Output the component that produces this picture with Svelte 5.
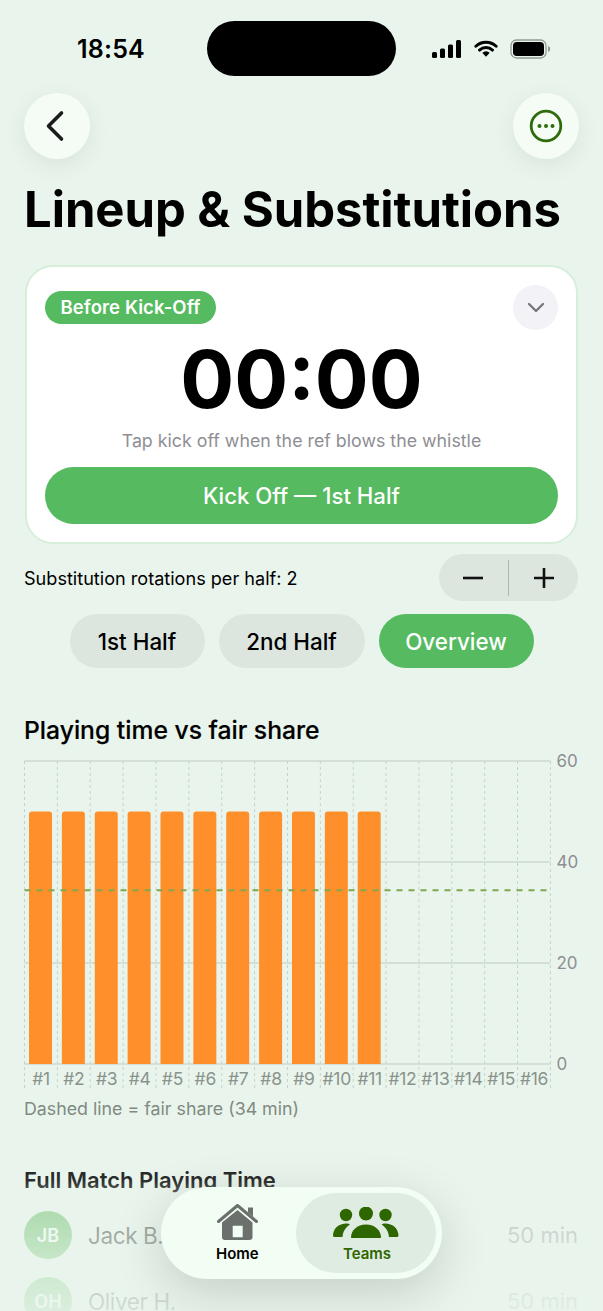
<script>
  const ticks = [60, 40, 20, 0];
  const top = 8;
  const plotH = 303;
  const colW = 32.87;
  const players = Array.from({ length: 16 }, (_, i) => ({
    label: "#" + (i + 1),
    minutes: i < 11 ? 50 : 0
  }));
  const y = (v) => top + plotH - (v / 60) * plotH;

  const rows = [
    { initials: "JB", name: "Jack B.", time: "50 min" },
    { initials: "OH", name: "Oliver H.", time: "50 min" }
  ];
</script>

<div class="page">
  <div class="status">
    <span class="time">18:54</span>
    <div class="island"></div>
    <div class="status-icons">
      <svg width="30" height="18" viewBox="0 0 30 18">
        <rect x="0" y="12" width="5" height="6" rx="1.5" />
        <rect x="8" y="8.5" width="5" height="9.5" rx="1.5" />
        <rect x="16" y="4.5" width="5" height="13.5" rx="1.5" />
        <rect x="24" y="0" width="5" height="18" rx="1.5" />
      </svg>
      <svg width="24" height="18" viewBox="0 0 26 19">
        <path d="M2 6.5a16 16 0 0 1 22 0M6 10.7a10.2 10.2 0 0 1 14 0" fill="none" stroke="#000" stroke-width="3.2" stroke-linecap="round" />
        <path d="M9 13.6a6 6 0 0 1 8 0L13 18z" />
      </svg>
      <svg width="41" height="20" viewBox="0 0 41 20">
        <rect x="1" y="1" width="35" height="18" rx="5.5" fill="none" stroke="#8f9a92" stroke-width="1.3" />
        <rect x="3" y="3" width="31" height="14" rx="3.8" />
        <path d="M38 7v6c1.4-.4 2.2-1.6 2.2-3S39.400 7.400 38 7z" fill="#8f9a92" />
      </svg>
    </div>
  </div>

  <div class="nav">
    <button class="round" aria-label="Back">
      <svg width="24" height="34" viewBox="0 0 24 34">
        <path d="M16.500 4 3.500 17l13 13" fill="none" stroke="#1c1c1e" stroke-width="3.600" stroke-linecap="round" stroke-linejoin="round" />
      </svg>
    </button>
    <button class="round" aria-label="More">
      <svg width="34" height="34" viewBox="0 0 34 34">
        <circle cx="17" cy="17" r="14.800" fill="none" stroke="#2e6b0a" stroke-width="2.800" />
        <circle cx="10.500" cy="17" r="2" fill="#2e6b0a" />
        <circle cx="17" cy="17" r="2" fill="#2e6b0a" />
        <circle cx="23.500" cy="17" r="2" fill="#2e6b0a" />
      </svg>
    </button>
  </div>

  <h1>Lineup &amp; Substitutions</h1>

  <section class="card">
    <div class="card-top">
      <span class="badge">Before Kick-Off</span>
      <button class="chev" aria-label="Collapse">
        <svg width="18" height="11" viewBox="0 0 18 11">
          <path d="M2 2l7 7 7-7" fill="none" stroke="#77777d" stroke-width="2.400" stroke-linecap="round" stroke-linejoin="round" />
        </svg>
      </button>
    </div>
    <div class="timer">00:00</div>
    <p class="hint">Tap kick off when the ref blows the whistle</p>
    <button class="kick">Kick Off — 1st Half</button>
  </section>

  <div class="rotations">
    <span>Substitution rotations per half: 2</span>
    <div class="stepper">
      <button aria-label="Decrease">
        <svg width="20" height="20" viewBox="0 0 20 20"><path d="M0 10h20" stroke="#111" stroke-width="2.600" /></svg>
      </button>
      <i></i>
      <button aria-label="Increase">
        <svg width="20" height="20" viewBox="0 0 20 20"><path d="M0 10h20M10 0v20" stroke="#111" stroke-width="2.600" /></svg>
      </button>
    </div>
  </div>

  <div class="tabs">
    <button class="tab first">1st Half</button>
    <button class="tab second">2nd Half</button>
    <button class="tab active">Overview</button>
  </div>

  <h2 class="chart-title">Playing time vs fair share</h2>

  <svg class="chart" width="603" height="344" viewBox="0 0 603 344">
    <g transform="translate(24.500 0)">
      {#each players as p, i}
        <line x1={i * colW} x2={i * colW} y1={top} y2="335" class="vline" />
      {/each}
      <line x1={16 * colW} x2={16 * colW} y1={top} y2="335" class="vline" />
      {#each ticks as t}
        <line x1="0" x2={16 * colW} y1={y(t)} y2={y(t)} class="hline" />
        <text x="532" y={y(t) + 6} class="tick">{t}</text>
      {/each}
      {#each players as p, i}
        {#if p.minutes > 0}
          <path
            d="M{i * colW + 4.500} {y(0)}V{y(p.minutes) + 3}q0-3 3-3h17q3 0 3 3V{y(0)}z"
            fill="#ff8f2b"
          />
        {/if}
        <text x={i * colW + colW / 2} y="332" class="xlabel">{p.label}</text>
      {/each}
      <line x1="0" x2={16 * colW} y1={y(34.4)} y2={y(34.4)} class="fair" />
    </g>
  </svg>

  <p class="caption">Dashed line = fair share (34 min)</p>

  <h2 class="list-title">Full Match Playing Time</h2>

  <div class="list">
    {#each rows as r}
      <div class="row">
        <span class="avatar">{r.initials}</span>
        <span class="name">{r.name}</span>
        <span class="mins">{r.time}</span>
      </div>
    {/each}
  </div>

  <div class="fade"></div>

  <nav class="tabbar">
    <div class="tabitem home">
      <svg width="42" height="37" viewBox="0 0 42 37">
        <path d="M1.500 17.500 20.500 1.500l19 16" fill="none" stroke="#6b706d" stroke-width="3" stroke-linecap="round" stroke-linejoin="round" />
        <path d="M31 3.500h5v9l-5-4z" fill="#6b706d" />
        <path fill-rule="evenodd" d="M20.500 6 35.500 18.500V33a3 3 0 0 1-3 3H8a3 3 0 0 1-3-3V18.500zM15.700 21.700v11.600h10V21.700z" fill="#6b706d" />
      </svg>
      <span>Home</span>
    </div>
    <div class="tabitem teams">
      <svg width="66" height="32" viewBox="0 0 66 32">
        <circle cx="13" cy="8" r="6.200" />
        <circle cx="33" cy="6.500" r="7" />
        <circle cx="52.500" cy="8" r="6.200" />
        <path d="M0 29c0-7 5-12 12.500-12.500 2.500 0 4 .5 4.500 1-4 2.500-7 6.500-7.500 12.500H1.500Q0 30 0 29zM65.500 29c0-7-5-12-12.500-12.500-2.500 0-4 .5-4.500 1 4 2.500 7 6.500 7.500 12.500h7.500q2 0 2-1z" />
        <path d="M18 30.500c0-7 6-13 15-13s15 6 15 13q0 .5-1 .5H19q-1 0-1-.5z" />
      </svg>
      <span>Teams</span>
    </div>
  </nav>
</div>

<style>
  :global(body) {
    margin: 0;
    background: #e9f5ec;
  }

  .page {
    position: relative;
    height: 1311px;
    overflow: hidden;
    background: #e9f5ec;
    font-family: Inter, "Liberation Sans", sans-serif;
    color: #000;
    box-sizing: border-box;
  }

  button {
    font-family: inherit;
    border: none;
    padding: 0;
  }

  .status {
    display: grid;
    grid-template-columns: 207px 189px 1fr;
    align-items: center;
    padding-top: 21px;
    height: 55px;
  }

  .time {
    justify-self: center;
    margin-left: 15px;
    font-size: 25px;
    font-weight: 600;
    letter-spacing: 0.2px;
  }

  .island {
    height: 55px;
    border-radius: 28px;
    background: #000;
  }

  .status-icons {
    display: flex;
    align-items: center;
    gap: 12px;
    margin-left: 36px;
  }

  .nav {
    display: flex;
    justify-content: space-between;
    padding: 17px 24px 0;
  }

  .round {
    width: 66px;
    height: 66px;
    border-radius: 50%;
    background: #f5fcf6;
    box-shadow: 0 6px 24px rgba(0, 0, 0, 0.07);
    display: flex;
    align-items: center;
    justify-content: center;
  }

  h1 {
    margin: 21px 0 0 24px;
    font-size: 49px;
    line-height: 60px;
    font-weight: 700;
    letter-spacing: -0.05px;
    white-space: nowrap;
  }

  .card {
    margin: 25px 25px 0;
    height: 279px;
    box-sizing: border-box;
    padding: 18px 18px 0;
    background: #fff;
    border: 2px solid #d6eeda;
    border-radius: 28px;
  }

  .card-top {
    display: flex;
    justify-content: space-between;
    align-items: center;
  }

  .badge {
    height: 33px;
    line-height: 33px;
    padding: 0 15.500px;
    border-radius: 17px;
    background: #55ba60;
    color: #fff;
    font-size: 18.500px;
    font-weight: 600;
    letter-spacing: 0.1px;
  }

  .chev {
    width: 45px;
    height: 45px;
    border-radius: 50%;
    background: #f2f2f7;
    display: flex;
    align-items: center;
    justify-content: center;
  }

  .timer {
    margin-top: -1px;
    text-align: center;
    font-size: 80px;
    line-height: 100px;
    font-weight: 700;
  }

  .hint {
    margin: 0;
    text-align: center;
    font-size: 17.800px;
    line-height: 24px;
    color: #8e8e93;
  }

  .kick {
    display: block;
    width: 100%;
    height: 57px;
    margin-top: 14px;
    border-radius: 29px;
    background: #55ba60;
    color: #fff;
    font-size: 22.200px;
    font-weight: 500;
  }

  .rotations {
    display: flex;
    justify-content: space-between;
    align-items: center;
    margin: 10px 25px 0 24px;
    font-size: 18.100px;
  }

  .stepper {
    display: flex;
    align-items: center;
    width: 139px;
    height: 47px;
    border-radius: 24px;
    background: #dce6df;
  }

  .stepper button {
    flex: 1;
    height: 47px;
    background: none;
    display: flex;
    align-items: center;
    justify-content: center;
  }

  .stepper i {
    width: 1.500px;
    height: 36px;
    background: #aeb6b0;
  }

  .tabs {
    display: flex;
    justify-content: center;
    gap: 14px;
    margin-top: 13px;
  }

  .tab {
    height: 54px;
    border-radius: 27px;
    background: #dce6df;
    color: #000;
    font-size: 22.400px;
    font-weight: 500;
  }

  .first {
    width: 135px;
  }

  .second {
    width: 146px;
  }

  .active {
    width: 155px;
    background: #55ba60;
    color: #fff;
  }

  h2 {
    margin: 0;
    font-weight: 600;
  }

  .chart-title {
    margin: 45px 0 0 24px;
    font-size: 24.700px;
    line-height: 34px;
    font-weight: 500;
    -webkit-text-stroke: 0.2px #000;
  }

  .chart {
    display: block;
    margin-top: 6px;
  }

  .vline {
    stroke: #c6d2ca;
    stroke-width: 1;
    stroke-dasharray: 3 3;
  }

  .hline {
    stroke: #cdd8cf;
    stroke-width: 1.500;
  }

  .fair {
    stroke: #7fa850;
    stroke-width: 2;
    stroke-dasharray: 6 6;
  }

  .tick {
    font-size: 17px;
    fill: #8e8e93;
  }

  .xlabel {
    font-size: 17.500px;
    letter-spacing: -0.3px;
    fill: #8a938c;
    text-anchor: middle;
  }

  .caption {
    margin: 0 0 0 24px;
    font-size: 17.800px;
    line-height: 24px;
    color: #7f8a82;
  }

  .list-title {
    margin: 45px 0 0 24px;
    font-size: 22px;
    line-height: 28px;
    color: #111;
  }

  .list {
    display: flex;
    flex-direction: column;
    gap: 18px;
    margin: 17px 25px 0 24px;
  }

  .row {
    display: flex;
    align-items: center;
    gap: 16px;
    height: 48px;
  }

  .avatar {
    width: 48px;
    height: 48px;
    border-radius: 50%;
    background: #4fb34f;
    color: #fff;
    font-size: 18px;
    font-weight: 600;
    display: flex;
    align-items: center;
    justify-content: center;
  }

  .name {
    flex: 1;
    font-size: 22.500px;
    letter-spacing: -0.4px;
    color: #000;
  }

  .mins {
    font-size: 22px;
    color: #8e8e93;
  }

  .fade {
    position: absolute;
    left: 0;
    right: 0;
    top: 1120px;
    bottom: 0;
    background: linear-gradient(
      to bottom,
      rgba(233, 245, 236, 0) 0,
      rgba(233, 245, 236, 0.12) 60px,
      rgba(233, 245, 236, 0.62) 91px,
      rgba(233, 245, 236, 0.77) 139px,
      rgba(233, 245, 236, 0.86) 170px,
      rgba(233, 245, 236, 0.9) 191px
    );
  }

  .tabbar {
    position: absolute;
    left: 161px;
    top: 1187px;
    width: 281px;
    height: 92px;
    box-sizing: border-box;
    padding: 6px;
    border-radius: 46px;
    background: #f2fdf3;
    box-shadow: 0 14px 50px rgba(0, 0, 0, 0.16);
    display: grid;
    grid-template-columns: 129px 140px;
  }

  .tabitem {
    display: flex;
    flex-direction: column;
    align-items: center;
    font-size: 15px;
    font-weight: 600;
  }

  .tabitem span {
    position: absolute;
    top: 58px;
    line-height: 18px;
  }

  .tabitem svg {
    display: block;
  }

  .home svg {
    margin-top: 11px;
    margin-left: 12px;
  }

  .home span {
    left: 55px;
  }

  .teams {
    height: 80px;
    border-radius: 40px;
    background: #dfece2;
    color: #2e6600;
    fill: #2e6600;
  }

  .teams svg {
    margin-top: 14px;
  }

  .teams span {
    left: 182px;
  }
</style>
